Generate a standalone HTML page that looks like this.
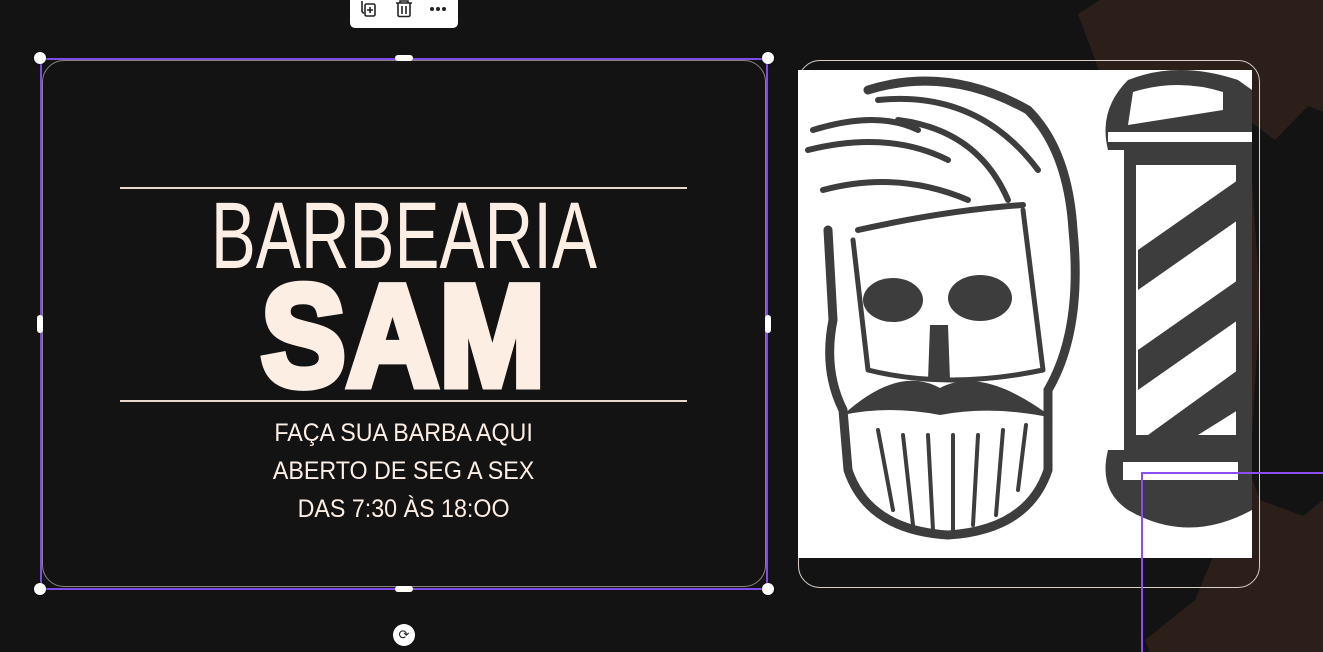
<!DOCTYPE html>
<html><head><meta charset="utf-8"><style>
html,body{margin:0;padding:0;width:1323px;height:652px;overflow:hidden;background:#131313;font-family:"Liberation Sans",sans-serif}
.abs{position:absolute}
.card{left:42px;top:60px;width:724px;height:527px;border:1px solid #8a847f;border-radius:22px;box-sizing:border-box}
.sel{left:40px;top:58px;width:728px;height:532px;border:2px solid #7d4ce8;box-sizing:border-box}
.line{height:2px;background:#e8d8cc;left:120px;width:567px}
.t{color:#fdeee4;white-space:nowrap;text-align:center;left:0;width:808px}
.dot{width:12px;height:12px;border-radius:50%;background:#fff;box-shadow:0 0 2px rgba(0,0,0,.5)}
</style></head><body>
<svg class="abs" style="left:0;top:0" width="1323" height="652">
<polygon fill="#2c1e19" points="1078,14 1100,0 1323,0 1323,112 1308,106 1275,140 1248,120 1260,300 1250,470 1180,420 1220,540 1195,600 1145,640 1150,652 1323,652 1323,500 1303,516 1260,500"/>
</svg>
<div class="abs card"></div>
<div class="abs line" style="top:187px"></div>
<div class="abs line" style="top:400px"></div>
<div class="abs t" style="top:186px;font-size:95px;line-height:100px;"><span style="display:inline-block;transform:scaleX(0.71)">BARBEARIA</span></div>
<div class="abs t" style="top:262px;font-size:143px;line-height:150px;font-weight:bold;"><span style="display:inline-block;transform:scaleX(0.88);-webkit-text-stroke:9px #fdeee4;letter-spacing:2px">SAM</span></div>
<div class="abs t" style="top:414px;font-size:25px;line-height:38px;"><span style="display:inline-block;transform:scaleX(0.93)">FAÇA SUA BARBA AQUI<br>ABERTO DE SEG A SEX<br>DAS 7:30 ÀS 18:OO</span></div>
<div class="abs sel"></div>
<div class="abs dot" style="left:34px;top:52px"></div>
<div class="abs dot" style="left:762px;top:52px"></div>
<div class="abs dot" style="left:34px;top:583px"></div>
<div class="abs dot" style="left:762px;top:583px"></div>
<div class="abs" style="left:395px;top:55px;width:18px;height:6px;border-radius:3px;background:#fff"></div>
<div class="abs" style="left:395px;top:586px;width:18px;height:6px;border-radius:3px;background:#fff"></div>
<div class="abs" style="left:37px;top:315px;width:6px;height:18px;border-radius:3px;background:#fff"></div>
<div class="abs" style="left:765px;top:315px;width:6px;height:18px;border-radius:3px;background:#fff"></div>
<div class="abs" style="left:393px;top:624px;width:22px;height:22px;border-radius:50%;background:#fff;text-align:center;font-size:13px;line-height:22px;color:#222">⟳</div>
<div class="abs" style="left:350px;top:-8px;width:108px;height:36px;background:#fff;border-radius:5px"></div>
<svg class="abs" style="left:350px;top:0" width="108" height="28">
<g fill="none" stroke="#222" stroke-width="1.6">
<rect x="15" y="4" width="10" height="12" rx="1.5"/><path d="M12 1v10a2 2 0 0 0 2 2"/><path d="M20 7v6M17 10h6"/>
<path d="M46 3h16M50 3v-2h8v2M48 3v12a1.5 1.5 0 0 0 1.5 1.5h9A1.5 1.5 0 0 0 60 15V3M52 6v8M56 6v8"/>
</g>
<circle cx="82" cy="9" r="2" fill="#222"/><circle cx="88" cy="9" r="2" fill="#222"/><circle cx="94" cy="9" r="2" fill="#222"/>
</svg>
<div class="abs" style="left:798px;top:60px;width:462px;height:528px;border:1px solid #d8cfc5;border-radius:22px;box-sizing:border-box"></div>
<svg class="abs" style="left:798px;top:70px" width="454" height="488">
<rect width="454" height="488" fill="#fff"/>
<g fill="none" stroke="#3d3d3d" stroke-linecap="round">
<path stroke-width="9" d="M70 20 Q150 -5 230 40 Q270 80 275 160 Q285 260 250 320 L250 400 Q230 460 150 465 Q70 460 50 400 L45 340 Q25 300 35 250 L30 160"/>
<path stroke-width="6" d="M15 60 Q80 40 120 60 M10 80 Q90 60 150 90 M25 120 Q100 100 170 130 M60 160 Q150 140 225 135 M80 30 Q180 20 240 100 M100 50 Q180 60 210 130"/>
<path stroke-width="5" d="M55 170 L70 300 M225 140 L245 300 M70 300 Q150 320 245 300"/>
<path stroke-width="4" d="M80 360 L95 440 M105 365 L115 455 M130 365 L135 460 M155 365 L155 460 M180 365 L175 455 M205 360 L198 445 M228 355 L220 420"/>
</g>
<g fill="#3d3d3d">
<ellipse cx="95" cy="230" rx="30" ry="22"/><ellipse cx="182" cy="228" rx="32" ry="23"/>
<path d="M132 255 L150 255 L152 310 L130 310Z"/>
<path d="M45 345 Q100 295 142 318 Q185 295 255 348 Q195 335 142 345 Q90 335 45 345Z"/>
</g>
<g fill="#3d3d3d">
<path d="M330 10 Q380 -10 440 10 L454 20 L454 80 L310 80 Q300 40 330 10Z"/>
<path d="M335 22 Q380 8 425 22 L425 40 L330 55Z" fill="#fff"/>
<path d="M310 62 L454 62 L454 72 L310 72Z" fill="#fff"/>
<rect x="326" y="80" width="128" height="300"/>
<rect x="338" y="95" width="100" height="270" fill="#fff"/>
<path d="M340 180 L440 110 L440 150 L340 220Z M340 280 L440 210 L440 250 L340 320Z M350 365 L440 300 L440 340 L400 365Z"/>
<path d="M310 380 L454 380 L454 440 Q390 475 330 440 Q300 420 310 380Z"/>
<path d="M325 392 L440 392 L440 410 L325 410Z" fill="#fff"/>
</g>
</svg>
<div class="abs" style="left:1141px;top:472px;width:2px;height:180px;background:#8b4cf0"></div>
<div class="abs" style="left:1141px;top:472px;width:182px;height:2px;background:#8b4cf0"></div>
</body></html>
